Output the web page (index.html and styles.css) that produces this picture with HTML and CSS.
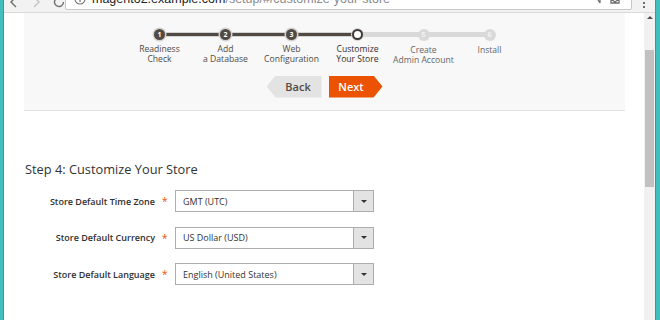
FILE: index.html
```html
<!DOCTYPE html>
<html lang="en">
<head>
<meta charset="utf-8">
<title>Magento Setup - Customize Your Store</title>
<link rel="stylesheet" href="styles.css">
</head>
<body>
<div class="window">
  <div class="edge edge-left"></div>
  <div class="browser">
    <div class="toolbar">
      <div class="nav">
        <svg class="nav-icon" width="12" height="12" viewBox="0 0 12 12"><path d="M8 1 L3 6 L8 11" fill="none" stroke="#6e6e6e" stroke-width="1.4"/></svg>
        <svg class="nav-icon" width="12" height="12" viewBox="0 0 12 12"><path d="M4 1 L9 6 L4 11" fill="none" stroke="#c4c4c4" stroke-width="1.4"/></svg>
        <svg class="nav-icon" width="14" height="14" viewBox="0 0 14 14"><path d="M11.5 7 A4.5 4.5 0 1 1 9.8 3.5" fill="none" stroke="#6e6e6e" stroke-width="1.4"/></svg>
      </div>
      <div class="omnibox">
        <svg class="info" width="12" height="12" viewBox="0 0 12 12"><circle cx="6" cy="6" r="5" fill="none" stroke="#6e6e6e" stroke-width="1.1"/><path d="M6 5 V9" stroke="#6e6e6e" stroke-width="1.2"/></svg>
        <span class="url"><span class="host">magento2.example.com</span><span class="path">/setup/#/customize-your-store</span></span>
        <span class="omni-icons">
          <svg width="10" height="12" viewBox="0 0 10 12"><path d="M5 0 V10 M3 7 L5 10" fill="none" stroke="#6e6e6e" stroke-width="1.3"/></svg>
          <svg width="12" height="12" viewBox="0 0 12 12"><path d="M2 0 V10 H10 V0 M2 6 L6 9 L10 6" fill="none" stroke="#6e6e6e" stroke-width="1.3"/></svg>
        </span>
      </div>
      <div class="menu"><span></span><span></span></div>
    </div>
    <div class="viewport">
      <main class="page">
        <section class="nav-panel">
          <ol class="steps">
            <li class="step done"><span class="dot">1</span><span class="label">Readiness<br>Check</span></li>
            <li class="step done"><span class="dot">2</span><span class="label">Add<br>a Database</span></li>
            <li class="step done"><span class="dot">3</span><span class="label">Web<br>Configuration</span></li>
            <li class="step current"><span class="dot"></span><span class="label">Customize<br>Your Store</span></li>
            <li class="step todo"><span class="dot">5</span><span class="label">Create<br>Admin Account</span></li>
            <li class="step todo"><span class="dot">6</span><span class="label">Install</span></li>
          </ol>
          <div class="actions">
            <button class="btn btn-back" type="button">Back</button>
            <button class="btn btn-next" type="button">Next</button>
          </div>
        </section>
        <h1 class="title">Step 4: Customize Your Store</h1>
        <form class="form">
          <div class="row">
            <label class="field-label">Store Default Time Zone</label>
            <span class="req">*</span>
            <div class="select"><span class="value">GMT (UTC)</span><span class="caret"></span></div>
          </div>
          <div class="row">
            <label class="field-label">Store Default Currency</label>
            <span class="req">*</span>
            <div class="select"><span class="value">US Dollar (USD)</span><span class="caret"></span></div>
          </div>
          <div class="row">
            <label class="field-label">Store Default Language</label>
            <span class="req">*</span>
            <div class="select"><span class="value">English (United States)</span><span class="caret"></span></div>
          </div>
        </form>
      </main>
      <div class="scrollbar">
        <span class="scroll-up"></span>
        <span class="thumb"></span>
      </div>
    </div>
  </div>
  <div class="edge edge-right"></div>
</div>
</body>
</html>
```

FILE: styles.css
```css
* { box-sizing: border-box; }
html, body { margin: 0; padding: 0; }
body {
  width: 660px;
  height: 320px;
  overflow: hidden;
  font-family: "Open Sans", "DejaVu Sans", sans-serif;
  background: #fff;
  color: #333;
}
.window { display: flex; height: 320px; }
.edge { background: #41bfbf; }
.edge-left { width: 4px; border-right: 1px solid #2f9e9e; }
.edge-right { width: 5px; border-left: 1px solid #2f9e9e; }
.browser { flex: 1; display: flex; flex-direction: column; min-width: 0; }

/* toolbar */
.toolbar {
  height: 13px;
  background: #f2f2f2;
  border-bottom: 1px solid #dadada;
  display: flex;
  align-items: flex-end;
  overflow: hidden;
  padding-bottom: 3px;
}
.nav { display: flex; gap: 10px; align-items: center; padding-left: 4px; width: 61px; flex: none; }
.nav-icon { flex: none; }
.omnibox {
  flex: none;
  width: 567px;
  height: 22px;
  margin-bottom: -1px;
  background: #fff;
  border: 1px solid #c9c9c9;
  border-radius: 2px;
  display: flex;
  align-items: center;
  padding: 0 10px 0 8px;
  font-family: "Liberation Sans", "DejaVu Sans", sans-serif;
  font-size: 12.5px;
}
.info { flex: none; margin-right: 6px; }
.url { flex: 1; white-space: nowrap; }
.host { color: #222; }
.path { color: #8a8a8a; }
.omni-icons { display: flex; gap: 4px; }
.menu { flex: 1; display: flex; flex-direction: column; align-items: center; gap: 2px; padding-bottom: 1px; }
.menu span { width: 2px; height: 2px; background: #6e6e6e; }

/* viewport */
.viewport { flex: 1; display: flex; min-height: 0; }
.page { flex: 1; padding: 0 19px 0 20px; overflow: hidden; }
.scrollbar {
  width: 11px;
  flex: none;
  background: #f1f1f1;
  display: flex;
  flex-direction: column;
  align-items: center;
}
.scroll-up {
  margin-top: 3px;
  width: 0; height: 0;
  border-left: 3px solid transparent;
  border-right: 3px solid transparent;
  border-bottom: 3px solid #505050;
}
.thumb { margin-top: 31px; width: 9px; height: 137px; background: #c1c1c1; }

/* navigation panel */
.nav-panel {
  background: #f8f8f8;
  border-bottom: 1px solid #e3e3e3;
  height: 98px;
  padding-top: 16px;
}
.steps {
  list-style: none;
  margin: 0;
  padding: 0;
  display: flex;
  justify-content: center;
}
.step {
  width: 66px;
  display: flex;
  flex-direction: column;
  align-items: center;
  position: relative;
}
.step + .step::before {
  content: "";
  position: absolute;
  top: 3px;
  left: -50%;
  width: 100%;
  height: 5px;
  box-sizing: border-box;
}
.step.done + .step::before {
  background: #514943;
  border: 1px solid #d3d3d3;
}
.step.current + .step::before,
.step.todo + .step::before {
  background: #d9d9d9;
}
.dot {
  position: relative;
  z-index: 1;
  width: 11px;
  height: 11px;
  border-radius: 50%;
  display: flex;
  align-items: center;
  justify-content: center;
  font-size: 7px;
  font-weight: 700;
  line-height: 1;
}
.done .dot {
  background: #514943;
  color: #fff;
  box-shadow: 0 0 0 1.5px #d3d3d3;
}
.current .dot {
  background: #fff;
  border: 2.5px solid #3d3835;
  box-shadow: 0 0 0 1px #d3d3d3;
}
.todo .dot {
  background: #d9d9d9;
  color: #f4f4f4;
  width: 12px;
  height: 12px;
  margin-top: -0.5px;
}
.label {
  margin-top: 4px;
  font-size: 8.6px;
  line-height: 10px;
  text-align: center;
  color: #514943;
  white-space: nowrap;
}
.current .label { color: #303030; }
.todo .label { color: #666; }

.actions {
  display: flex;
  justify-content: center;
  gap: 7px;
  margin-top: 11px;
}
.btn {
  border: 0;
  height: 22px;
  font-family: "Open Sans", "DejaVu Sans", sans-serif;
  font-size: 11px;
  padding: 0;
  cursor: pointer;
}
.btn-back {
  width: 55px;
  padding-left: 8px;
  background: #e3e3e3;
  color: #514943;
  font-weight: 600;
  clip-path: polygon(9px 0, 100% 0, 100% 100%, 9px 100%, 0 50%);
}
.btn-next {
  width: 54px;
  padding-right: 9px;
  background: #eb5202;
  color: #fff;
  font-weight: 600;
  clip-path: polygon(0 0, calc(100% - 9px) 0, 100% 50%, calc(100% - 9px) 100%, 0 100%);
}

/* form */
.title {
  margin: 49px 0 0;
  font-size: 12.8px;
  font-weight: 400;
  color: #333;
  line-height: 18px;
  padding-left: 1px;
}
.form {
  margin-top: 12px;
  display: flex;
  flex-direction: column;
  gap: 14.5px;
}
.row {
  display: grid;
  grid-template-columns: 131px 20px 199px;
  align-items: center;
}
.field-label {
  text-align: right;
  font-size: 9px;
  font-weight: 600;
  color: #303030;
  white-space: nowrap;
}
.req {
  color: #eb5202;
  font-size: 10px;
  padding-left: 7px;
  line-height: 1;
}
.select {
  height: 22px;
  border: 1px solid #adadad;
  background: #fff;
  display: flex;
  align-items: stretch;
}
.value {
  flex: 1;
  font-size: 9px;
  color: #333;
  padding-left: 7px;
  display: flex;
  align-items: center;
}
.caret {
  width: 20px;
  background: #e3e3e3;
  border-left: 1px solid #adadad;
  display: flex;
  align-items: center;
  justify-content: center;
}
.caret::after {
  content: "";
  border-left: 3px solid transparent;
  border-right: 3px solid transparent;
  border-top: 3px solid #333;
}
```
